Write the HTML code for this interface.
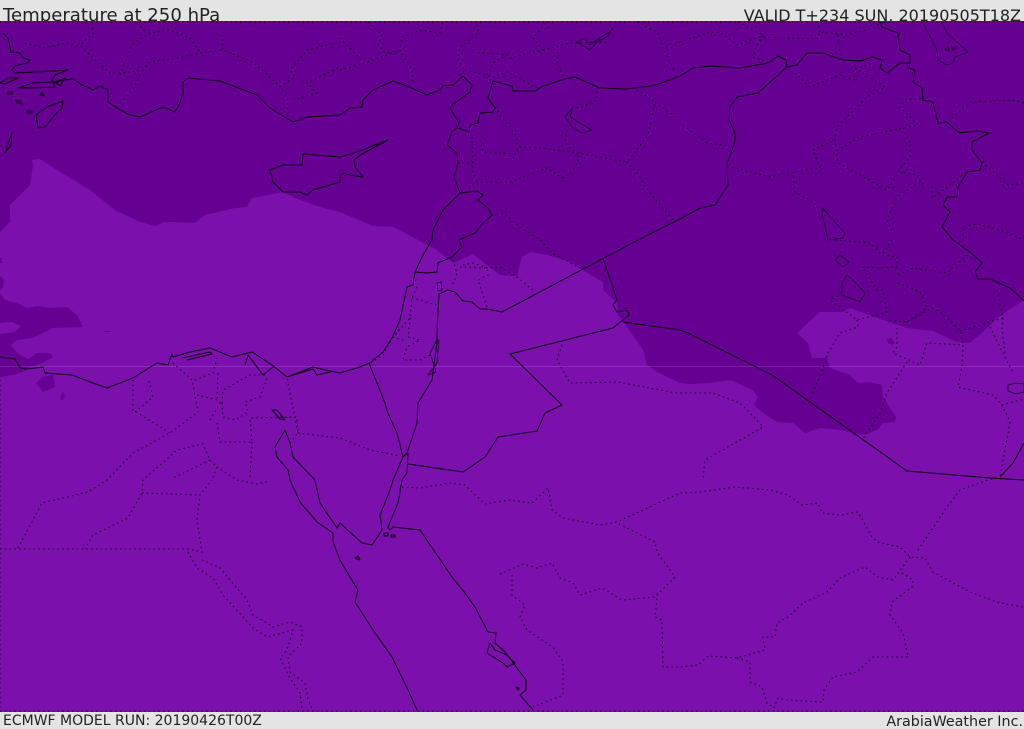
<!DOCTYPE html>
<html><head><meta charset="utf-8"><title>Temperature at 250 hPa</title>
<style>
html,body{margin:0;padding:0;background:#e4e4e4}
#w{position:relative;width:1024px;height:729px;overflow:hidden;background:#e4e4e4}
svg{position:absolute;left:0;top:0}
.s{fill:none;stroke:#0a0014;stroke-width:1;stroke-linejoin:round}
.t{fill:none;stroke:#1a0030;stroke-width:.8;stroke-linejoin:round}
.d{fill:none;stroke:#14001f;stroke-width:1.1;stroke-dasharray:1.4 3.4}
text{font-family:"DejaVu Sans",sans-serif;fill:#222}
</style></head><body><div id="w">
<svg width="1024" height="729" viewBox="0 0 1024 729">
<text x="3" y="21" font-size="18.1">Temperature at 250 hPa</text>
<text x="1021" y="21" font-size="16" text-anchor="end">VALID T+234 SUN, 20190505T18Z</text>
<text x="3" y="725" font-size="14">ECMWF MODEL RUN: 20190426T00Z</text>
<text x="1023" y="726" font-size="14.3" text-anchor="end">ArabiaWeather Inc.</text>
<rect x="0" y="21" width="1024" height="691" fill="#7b10ad"/>
<path fill="#660092" d="M0 21H1024V300L1013 307 997 318 985 330 970 343 957 342 933 331 907 328 877 318 850 308 843 312 820 312 797 333 808 343 812 358 827 358 830 368 850 375 858 383 870 382 882 385 883 397 896 417 895 422 883 423 877 430 863 435 840 430 820 428 805 433 793 423 777 422 763 413 754 405 758 397 753 390 730 380 710 383 690 384 680 383 657 372 647 365 643 350 627 327 618 315 617 303 603 290 603 282 583 270 570 262 547 255 530 252 522 257 517 276 500 275 487 265 473 254 467 257 453 263 437 250 418 240 393 227 373 226 340 212 320 207 295 198 283 192 262 196 252 198 247 207 235 208 205 215 195 223 175 222 165 222 155 226 140 222 115 210 90 190 60 172 40 159 32 160 33 165 30 185 10 205 10 222 0 232Z"/>
<path fill="#660092" d="M0 276L4 280 3 288 0 290ZM0 293L5 300 17 303 27 308 37 306 50 308 67 307 77 315 83 327 53 328 33 338 17 340 11 345 17 353 28 359 37 353 50 353 53 357 43 363 30 367 22 372 13 375 0 377ZM36 383L43 377 53 375 55 387 43 392ZM60 397L63 392 65 397 62 401ZM0 258L2 258 2 263 0 263ZM887 339L891 338 895 343 892 345 888 343ZM104 331H111V332H104Z"/>
<path fill="#7b10ad" d="M0 323L12 322 21 326 15 332 0 334Z"/>
<rect x="0" y="366" width="1024" height="1" fill="#fff" opacity=".12"/>
<g class="s">
<path d="M3 33L8 38 11 52 20 53 23 58 30 60 27 63 15 66 12 70 15 73 37 72 68 70 55 75 52 80 55 83 63 80 73 79 82 85 93 90 100 86 108 90 108 102 117 108 130 115 140 117 163 107 175 112 180 103 183 93 183 82 188 78 220 81 257 95 270 108 293 122 307 117 340 115 350 108 362 107 363 100 373 90 393 81 407 86 427 95 440 90 443 86 453 85 463 76 472 85 470 92 452 105 450 108 459 123 457 128 452 132 447 145 457 153 458 163 454 177 460 193 477 191 483 195 478 200 488 208 492 215 483 223 475 233 459 240 462 247 452 257 438 263 437 272 427 273 415 272"/>
<path d="M460 193L443 210 433 230 432 240 430 243 422 257 415 272 413 285 407 287 400 320 392 338 383 352 370 363 357 368 340 373 330 371 313 367 287 377 272 365 252 352 248 353 232 357 210 348 190 352 173 357 172 354 168 365 157 363 133 378 107 388 93 383 72 375 45 373 43 367 27 369 20 368 15 359 0 357"/>
<path d="M182 358L210 352 212 354 187 360M245 365L248 355 263 375 273 367M287 377L313 369 317 375 330 372"/>
<path d="M270 170L283 165 302 165 303 154 340 157 357 152 388 140 360 155 354 160 355 167 363 177 350 175 342 173 340 177 340 182 313 190 307 195 300 192 293 192 283 192 273 182Z"/>
<path d="M36 115L47 107 63 101 62 108 53 117 45 127 38 128ZM7 147L12 132 11 145 5 153ZM0 83L8 78 18 78 5 84ZM18 88L33 83 53 82 55 87 33 88ZM42 92L44 96 40 95ZM55 82L65 78 60 86ZM8 92h4v2h-4ZM15 100l5 1 2 3-4-1ZM27 111h5v2h-5Z"/>
<path d="M493 81L512 86 513 91 535 91 543 86 565 79 575 77 600 88 625 89 653 86 680 76 693 68 710 66 740 68 768 63 778 56 786 60 787 67 797 65 807 53 823 53 843 60 860 61 873 57 882 60 880 68 887 73 900 63 910 63 909 68 915 70 913 82 922 88 923 100 933 102 938 123 947 122 959 133 977 131 989 133 972 142 972 150 982 163 980 170 967 172 958 187 957 197 947 197 943 205 950 212 942 227 953 240 970 252 982 263 975 272 978 279 990 279 1010 288 1024 301"/>
<path d="M493 81L488 98 495 108 493 112 480 113 478 123 470 125 469 132 458 128"/>
<path d="M880 22L882 27 898 33 900 50 910 55 910 63"/>
<path d="M787 67L758 93 737 97 730 107 729 120 735 133 735 142 727 163 728 185 715 205 700 208 680 219 638 240 502 312 487 309 480 309 472 302 463 301 455 292 448 290 439 294 438 313 437 333 437 343 432 380 418 403 417 423 407 453 403 457"/>
<path d="M603 258L617 300 613 305 617 312 627 310 629 315 613 328 510 354 562 405 545 413 537 431 498 437 485 457 463 472 408 464"/>
<path d="M623 322L680 330 688 333 772 375 907 471 990 478 1024 480M1000 477L1013 463 1024 443"/>
<path d="M369 363L385 403 387 411 397 433 403 457 393 480 390 490 380 515 382 530 372 545 362 543 340 523 337 528 320 503 315 480 293 457 290 443 285 430 275 447 277 457 288 470 290 480 300 502 317 522 333 533 333 542 340 560 350 577 358 590 355 602 373 630 392 657 408 690 417 710"/>
<path d="M408 453L407 473 402 480 398 503 388 527 390 530 393 527 420 530 437 555 452 577 465 593 475 607 488 632 496 633 495 643 505 652 517 668 526 680 526 690 520 695 533 710"/>
<path d="M490 643L487 653 503 663 507 667 515 663 507 655 495 650ZM355 558L360 560 358 556ZM384 533h4v3h-4ZM391 535h4v2h-4ZM516 687l3 1-1 2Z"/>
<path d="M272 410L277 410 285 420 280 419Z"/>
</g>
<g class="t">
<path d="M923 23L937 50 938 60 947 65 953 63 955 57 968 52 958 43 947 33 942 23"/>
<path d="M823 208L827 213 845 233 843 238 828 240 822 213ZM847 275L853 280 865 293 860 302 842 295 842 283ZM835 260L840 255 849 262 843 267Z"/>
<path d="M577 42L585 38 590 45 600 38 612 30 613 28 608 36 597 42 590 50ZM573 107L565 117 573 128 582 133 592 130 585 126 570 117Z"/>
<path d="M430 353L437 340 439 340 437 363 428 375 436 372ZM437 283L441 282 442 290 438 291Z"/>
<path d="M1008 385l8-2 8 1v8l-8 2-8-3Z"/>
<path d="M945 50l3-3 1 4ZM952 47l4 1-3 2Z"/>
</g>
<g class="d">
<path d="M0 22H1024M0 711H1024M0 380V711"/>
<path d="M25 43L43 48 67 43 82 47 97 62 110 73 123 73 143 70 150 62 177 58 200 53 222 50 253 62 280 87 288 100 287 117"/>
<path d="M92 23L93 33 80 45M120 75L133 43 150 33 170 30 190 38 200 52M137 23L147 33M117 107L133 90 140 75M280 87L295 77 290 70 307 50 340 42M293 100L317 93 307 83 340 67M222 50L223 37"/>
<path d="M340 70L365 63 400 50 402 37 420 30 440 33 443 22M368 22L382 35 378 45 385 53 400 50M340 38L363 62M400 50L412 70 413 83"/>
<path d="M477 25L478 33 460 47 458 60 465 70 457 77M465 70L493 77 507 72 537 88M473 52L507 55 493 63 487 75M510 58L543 50 533 38 547 22M543 50L570 43 607 42M558 52L557 63 564 78M637 22L657 32 665 52 675 72M680 42L665 52"/>
<path d="M597 87L597 100 580 108 573 107M567 130L565 143 578 155"/>
<path d="M495 107L502 117 517 137 517 150 513 158 520 147 540 148 578 153 627 162 648 135 655 102 637 90M655 102L680 120M627 162L637 173 650 193 673 220M578 155L578 163 570 173 562 178 547 168 510 182 477 182 467 190M472 137L473 173 477 182M480 140L483 152 513 154M458 163L473 163M492 215L503 213 520 227 540 240 552 253 580 268"/>
<path d="M463 265L473 263 487 268 500 267 517 277 535 292M453 260L457 273 452 287M460 267L487 268 488 275 478 280 483 295 487 307"/>
<path d="M417 287L412 298 410 318 393 337 403 340M412 298L420 300 437 305M410 318L408 337 420 340 407 347 403 360 420 360 430 355M393 337L383 355 370 363"/>
<path d="M562 345L557 360 570 383 617 382 677 393 713 393 740 403 752 415 763 427 705 460 703 480"/>
<path d="M402 487L420 488 450 483 465 485 485 504 508 500 532 503 548 488 552 510 563 518 600 525 617 522 680 493 700 492 735 487 770 490 788 495 802 505 818 503 822 513 840 515 858 512 872 537 877 542 900 547 910 557 925 558 933 572 970 592 1000 603 1024 607"/>
<path d="M918 550L947 507 960 490 988 480 1000 477"/>
<path d="M910 557L902 568 893 580 878 577 865 567 840 578 827 592 803 603 788 617 777 623 775 637 763 637 765 650 737 658 708 656 698 665 680 667 663 667 662 620 655 617 657 598"/>
<path d="M902 573L913 580 912 587 892 602 890 615 903 633 908 657 873 657 857 672 833 677 824 690 823 702 787 700 778 698 773 710M737 658L750 662 750 682 762 687 767 703 773 707"/>
<path d="M500 574L523 564 537 568 552 563 560 578 573 583 580 595 602 588 622 600 655 597 675 577 657 552 655 542 617 523M512 575L512 595 525 605 520 617 527 630 553 647 563 662 563 695 533 707"/>
<path d="M0 549H188L202 552 197 520 200 495 212 480M18 548L42 503 88 492 107 480 133 453 170 433 198 412M87 545L93 535 128 518 142 493 143 480 177 450 203 444 210 460 217 467 212 480M142 493L200 495M210 460L173 478M217 467L237 480 257 484 270 481"/>
<path d="M133 380L133 410 170 433M135 412L153 397 148 378M173 363L192 380 198 412M197 395L217 400 220 403 210 420M195 380L213 373 218 355M218 373L217 400M222 403L223 390 250 375 267 375M222 403L223 417 235 420 248 412 245 402 260 397 267 378M217 423L220 442 252 442 250 418 297 417 298 433 287 378M252 442L250 480M298 433L340 438 370 450 400 456M290 443L298 433"/>
<path d="M188 552L197 568 213 578 223 595 253 628 267 637 293 630 287 650 280 658 290 678 300 693 302 710M202 560L220 568 247 600 253 615 267 623 273 627 290 622 302 627 302 643 288 657 290 672 305 683 308 700 313 710"/>
<path d="M680 42L707 33 720 32 737 45 760 37 817 39 820 32 847 35 873 28 883 22M718 32L720 23M738 22L763 35 755 50 753 57 767 62M838 35L840 55M820 32L818 23"/>
<path d="M795 73L810 87 840 75 855 80 853 70 873 63M855 68L885 87 867 97 837 127 835 140 813 150 820 168 793 172 795 192 815 203 823 220M727 166L770 177 793 172M683 125L707 143 730 146"/>
<path d="M835 140L838 163 887 190 900 172 918 175 920 182 932 187 932 198 953 183 967 170M833 153L860 137 903 128 918 125 900 107 905 100 925 98M903 128L910 143 910 157 897 172M952 118L970 102 1013 100 1024 103M920 182L897 197 887 220 893 233M982 162L1008 185 1024 183M963 240L963 227 977 224 1000 230 1024 240"/>
<path d="M835 240L870 243 882 255 897 257 897 267 880 268 862 267 877 290 883 290 887 312 857 320 830 300 840 295M892 240L882 255M898 275L913 268 947 273 970 253M898 283L920 292 927 308 907 322 887 320M907 322L932 308 942 313 960 330 963 343M960 331L1003 318 997 290M990 327L1013 373M1003 318L1002 328 1005 353"/>
<path d="M857 320L858 327 840 333 828 353 825 363 810 400M897 328L897 347 893 353 920 365 927 343 963 345 962 367 958 387 993 395 1002 405 1010 422 1000 477M907 362L887 393 880 413 867 433 862 440M1002 405L1024 399"/>
</g>
</svg>
</div></body></html>
